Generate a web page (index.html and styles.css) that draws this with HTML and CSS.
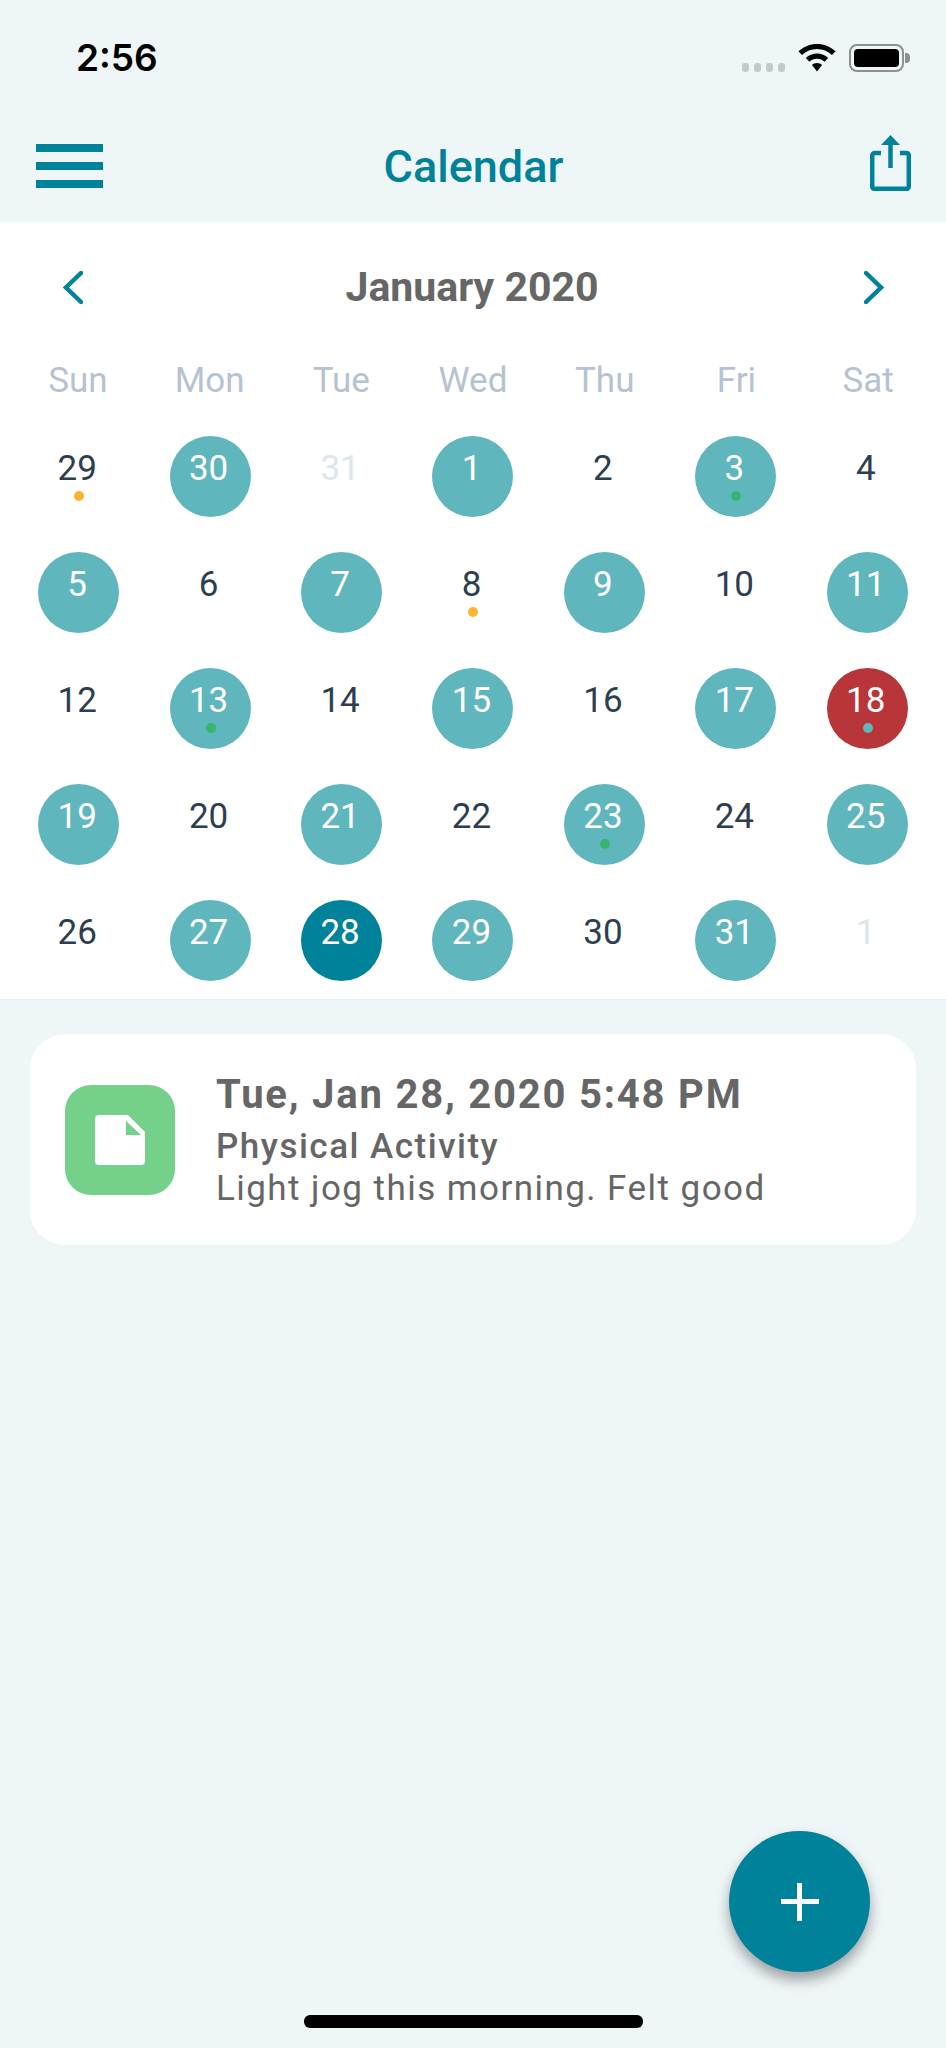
FILE: index.html
```html
<!DOCTYPE html>
<html>

<head>
  <meta charset="UTF-8">
  <title>Calendar</title>
  <link rel="stylesheet" href="styles.css">
</head>

<body>
  <div class="phone">
    <div class="status-bar">
      <span class="status-time">2:56</span>
      <div class="status-icons">
        <div class="signal-dots"><i></i><i></i><i></i><i></i></div>
        <svg class="wifi" width="38" height="28" viewBox="0 0 38 28">
          <path d="M19 0C12 0 5.500 2.700 0.500 7.300L4 11C8 7.300 13.300 5 19 5S30 7.300 34 11L37.500 7.300C32.500 2.700 26 0 19 0Z" />
          <path d="M19 9.500C14.800 9.500 10.800 11.200 7.800 14L11.400 17.800C13.400 15.900 16.100 14.700 19 14.700S24.600 15.900 26.600 17.800L30.200 14C27.200 11.200 23.200 9.500 19 9.500Z" />
          <path d="M19 19C17.100 19 15.300 19.700 14 20.900L19 27.500L24 20.900C22.700 19.700 20.900 19 19 19Z" />
        </svg>
        <div class="battery">
          <div class="battery-body"><div class="battery-fill"></div></div>
          <div class="battery-cap"></div>
        </div>
      </div>
    </div>

    <div class="nav-bar">
      <div class="menu-btn"><i></i><i></i><i></i></div>
      <h1 class="nav-title">Calendar</h1>
      <svg class="share-btn" width="41" height="56" viewBox="0 0 41 56">
        <path class="share-line" d="M11 18H5C3.300 18 2.200 19.100 2.200 20.800V51C2.200 52.700 3.300 53.800 5 53.800H36C37.700 53.800 38.800 52.700 38.800 51V20.800C38.800 19.100 37.700 18 36 18H30" />
        <path class="share-line" d="M20.500 9V33" />
        <path class="share-head" d="M20.500 0L30 10H11Z" />
      </svg>
    </div>

    <div class="calendar">
      <div class="month-row">
        <svg class="chevron" width="20" height="33" viewBox="0 0 20 33">
          <path d="M18 2L3 16.500L18 31" />
        </svg>
        <span class="month-name">January 2020</span>
        <svg class="chevron" width="20" height="33" viewBox="0 0 20 33">
          <path d="M2 2L17 16.500L2 31" />
        </svg>
      </div>

      <div class="week-row">
        <span>Sun</span><span>Mon</span><span>Tue</span><span>Wed</span><span>Thu</span><span>Fri</span><span>Sat</span>
      </div>

      <div class="days">
        <div class="day">29<i class="dot dot-yellow"></i></div>
        <div class="day day-on">30</div>
        <div class="day day-off">31</div>
        <div class="day day-on">1</div>
        <div class="day">2</div>
        <div class="day day-on">3<i class="dot dot-green"></i></div>
        <div class="day">4</div>

        <div class="day day-on">5</div>
        <div class="day">6</div>
        <div class="day day-on">7</div>
        <div class="day">8<i class="dot dot-yellow"></i></div>
        <div class="day day-on">9</div>
        <div class="day">10</div>
        <div class="day day-on">11</div>

        <div class="day">12</div>
        <div class="day day-on">13<i class="dot dot-green"></i></div>
        <div class="day">14</div>
        <div class="day day-on">15</div>
        <div class="day">16</div>
        <div class="day day-on">17</div>
        <div class="day day-alert">18<i class="dot dot-teal"></i></div>

        <div class="day day-on">19</div>
        <div class="day">20</div>
        <div class="day day-on">21</div>
        <div class="day">22</div>
        <div class="day day-on">23<i class="dot dot-green"></i></div>
        <div class="day">24</div>
        <div class="day day-on">25</div>

        <div class="day">26</div>
        <div class="day day-on">27</div>
        <div class="day day-today">28</div>
        <div class="day day-on">29</div>
        <div class="day">30</div>
        <div class="day day-on">31</div>
        <div class="day day-off">1</div>
      </div>
    </div>

    <div class="entry-card">
      <div class="entry-icon">
        <svg width="50" height="50" viewBox="0 0 50 50">
          <path class="file-sheet" d="M4 0H33L50 17V46C50 48.500 48.500 50 46 50H4C1.500 50 0 48.500 0 46V4C0 1.500 1.500 0 4 0Z" />
          <path class="file-fold" d="M31 6L46 20H31Z" />
        </svg>
      </div>
      <div class="entry-text">
        <div class="entry-date">Tue, Jan 28, 2020 5:48 PM</div>
        <div class="entry-type">Physical Activity</div>
        <div class="entry-note">Light jog this morning. Felt good</div>
      </div>
    </div>

    <div class="add-btn"><i class="plus-h"></i><i class="plus-v"></i></div>
    <div class="home-bar"></div>
  </div>
</body>

</html>
```
FILE: styles.css
```css
html,
body {
  margin: 0;
  padding: 0;
}

body {
  font-family: Roboto, sans-serif;
  background-color: #eef6f8;
}

.phone {
  position: relative;
  height: 2048px;
  overflow: hidden;
}

/* status bar */
.status-bar {
  height: 44px;
  padding-top: 44px;
  display: flex;
  justify-content: space-between;
  padding-left: 76px;
  padding-right: 36px;
}

.status-time {
  font-family: Inter, sans-serif;
  font-weight: 600;
  font-size: 37px;
  line-height: 28px;
  color: #000;
}

.status-icons {
  display: flex;
  align-items: flex-start;
}

.signal-dots {
  display: flex;
  gap: 5px;
  margin-top: 19px;
  margin-right: 13px;
}

.signal-dots i {
  width: 7px;
  height: 9px;
  border-radius: 3px;
  background: #c2cacc;
}

.wifi {
  fill: #000;
  margin-right: 13px;
}

.battery {
  display: flex;
  align-items: center;
  height: 28px;
}

.battery-body {
  box-sizing: border-box;
  width: 55px;
  height: 28px;
  padding: 3px;
  border: 2px solid #8c9190;
  border-radius: 8px;
}

.battery-fill {
  height: 100%;
  border-radius: 4px;
  background: #000;
}

.battery-cap {
  width: 5px;
  height: 10px;
  margin-left: 1px;
  border-radius: 0 4px 4px 0;
  background: #8c9190;
}

/* nav bar */
.nav-bar {
  height: 134px;
  display: flex;
  justify-content: space-between;
  align-items: flex-start;
  padding-left: 36px;
  padding-right: 35px;
}

.menu-btn {
  width: 67px;
  margin-top: 56px;
  display: flex;
  flex-direction: column;
  gap: 10px;
}

.menu-btn i {
  height: 8px;
  background: #00829b;
}

.nav-title {
  margin: 53px 0 0;
  font-size: 45px;
  line-height: 52px;
  font-weight: 500;
  color: #00829b;
  flex: 1;
  text-align: center;
  padding-right: 26px;
}

.share-btn {
  margin-top: 47px;
}

.share-line {
  fill: none;
  stroke: #00829b;
  stroke-width: 4.500;
}

.share-head {
  fill: #00829b;
}

/* calendar */
.calendar {
  height: 777px;
  background: #fff;
  box-shadow: 0 1px 0 #e6eff2;
}

.month-row {
  display: flex;
  justify-content: space-between;
  align-items: center;
  padding: 48px 62px 0 63px;
  height: 34px;
}

.chevron {
  fill: none;
  stroke: #00829b;
  stroke-width: 4.500;
  stroke-linecap: round;
}

.month-name {
  font-size: 41px;
  line-height: 34px;
  font-weight: 700;
  color: #666;
  margin-left: -3px;
}

.week-row {
  display: grid;
  grid-template-columns: repeat(7, 1fr);
  padding: 0 12px;
  margin-top: 57px;
  font-size: 35px;
  line-height: 40px;
  color: #b6c2d1;
  text-align: center;
}

.days {
  display: grid;
  grid-template-columns: repeat(7, 1fr);
  grid-auto-rows: 116px;
  padding: 0 13px;
  margin-top: 18px;
}

.day {
  position: relative;
  box-sizing: border-box;
  width: 81px;
  height: 81px;
  margin: 17px auto 0;
  padding: 13px 3px 0 0;
  border-radius: 50%;
  font-size: 35px;
  line-height: 40px;
  text-align: center;
  color: #2d3e50;
}

.day-on {
  background: #60b6bd;
  color: #fff;
}

.day-alert {
  background: #b83639;
  color: #fff;
}

.day-today {
  background: #00829b;
  color: #fff;
}

.day-off {
  color: #dde5ed;
}

.dot {
  position: absolute;
  left: 36px;
  top: 55px;
  width: 10px;
  height: 10px;
  border-radius: 50%;
}

.dot-yellow {
  background: #ffb32f;
}

.dot-green {
  background: #36b56d;
}

.dot-teal {
  background: #60b6bd;
}

/* entry card */
.entry-card {
  box-sizing: border-box;
  height: 211px;
  margin: 35px 30px 0;
  padding-left: 35px;
  display: flex;
  align-items: center;
  background: #fff;
  border-radius: 35px;
  color: #666;
}

.entry-icon {
  width: 110px;
  height: 110px;
  margin-right: 41px;
  display: flex;
  align-items: center;
  justify-content: center;
  border-radius: 26px;
  background: #75d189;
}

.file-sheet {
  fill: #fff;
}

.file-fold {
  fill: #75d189;
}

.entry-text {
  padding-top: 2px;
}

.entry-date {
  font-size: 40px;
  line-height: 48px;
  font-weight: 700;
  letter-spacing: 1.800px;
}

.entry-type {
  font-size: 35px;
  line-height: 42px;
  font-weight: 500;
  letter-spacing: 1.500px;
  margin-top: 7px;
}

.entry-note {
  font-size: 35px;
  line-height: 42px;
  letter-spacing: 1.450px;
}

/* floating button */
.add-btn {
  position: absolute;
  left: 729px;
  top: 1831px;
  width: 141px;
  height: 141px;
  border-radius: 50%;
  background: #00829b;
  box-shadow: 0 8px 14px rgba(0, 0, 0, 0.35);
}

.plus-h,
.plus-v {
  position: absolute;
  background: #fff;
}

.plus-h {
  left: 52px;
  top: 68px;
  width: 38px;
  height: 5px;
}

.plus-v {
  left: 68px;
  top: 52px;
  width: 5px;
  height: 38px;
}

.home-bar {
  position: absolute;
  left: 304px;
  top: 2015px;
  width: 339px;
  height: 13px;
  border-radius: 6px;
  background: #000;
}
```
